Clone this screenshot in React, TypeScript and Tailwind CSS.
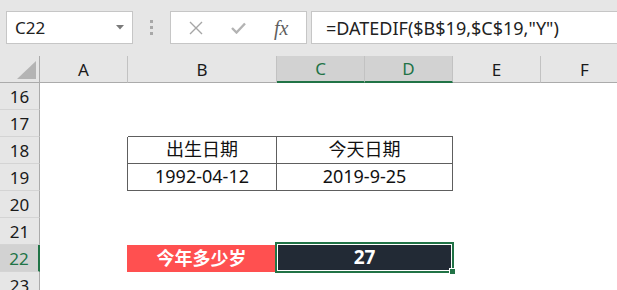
import React from "react";

const font = { fontFamily: '"Noto Sans", "Noto Sans CJK SC", sans-serif' };

type Col = { key: string; w: string };
const cols: Col[] = [
  { key: "A", w: "w-[88px]" },
  { key: "B", w: "w-[149px]" },
  { key: "C", w: "w-[88px]" },
  { key: "D", w: "w-[88px]" },
  { key: "E", w: "w-[88px]" },
  { key: "F", w: "w-[88px]" },
];

function RowHeader({ n, active }: { n: number; active?: boolean }) {
  return (
    <div
      className={
        "w-[40px] h-[27px] shrink-0 flex items-center justify-center text-[17px] leading-none border-b border-[#d4d4d4] " +
        (active
          ? "bg-[#d2d2d2] text-[#217346] border-r-2 border-r-[#217346]"
          : "bg-[#e6e6e6] text-[#1a1a1a] border-r border-r-[#ababab]")
      }
    >
      {n}
    </div>
  );
}

function Toolbar() {
  return (
    <div className="h-[56px] bg-[#e6e6e6] flex items-start pt-[11px]">
      <div className="ml-[6px] w-[127px] h-[33px] bg-white border border-[#c6c6c6] flex items-center pl-[8px] pr-[8px]">
        <span className="text-[17px] text-[#222] leading-none flex-1">C22</span>
        <svg width="8" height="5" viewBox="0 0 8 5">
          <polygon points="0,0 8,0 4,4.5" fill="#7a7a7a" />
        </svg>
      </div>
      <div className="w-[37px] h-[33px] flex flex-col items-center justify-center gap-[3px]">
        <div className="w-[3px] h-[3px] bg-[#a8a8a8]" />
        <div className="w-[3px] h-[3px] bg-[#a8a8a8]" />
        <div className="w-[3px] h-[3px] bg-[#a8a8a8]" />
      </div>
      <div className="w-[137px] h-[33px] bg-white border border-[#c6c6c6] flex items-center">
        <div className="w-[50px] flex justify-center pl-[1px]">
          <svg width="14" height="14" viewBox="0 0 14 14">
            <path d="M1 1 L13 13 M13 1 L1 13" stroke="#a6a6a6" strokeWidth="1.4" fill="none" />
          </svg>
        </div>
        <div className="w-[36px] flex justify-center">
          <svg width="15" height="12" viewBox="0 0 15 12">
            <path d="M1 6 L5.5 10.5 L14 1.5" stroke="#b3b3b3" strokeWidth="2.4" fill="none" />
          </svg>
        </div>
        <div className="w-[50px] flex justify-center">
          <span
            className="italic text-[20px] leading-none text-[#5f5f5f]"
            style={{ fontFamily: '"Liberation Serif", serif' }}
          >
            fx
          </span>
        </div>
      </div>
      <div className="ml-[4px] flex-1 h-[33px] bg-white border-y border-l border-[#c6c6c6] flex items-center pl-[14px]">
        <span className="text-[18px] leading-none text-[#222] whitespace-nowrap">=DATEDIF($B$19,$C$19,"Y")</span>
      </div>
    </div>
  );
}

function HeaderRow() {
  return (
    <div className="flex h-[27px]">
      <div className="w-[40px] shrink-0 bg-[#e6e6e6] border-r border-b border-[#ababab] relative overflow-hidden">
        <svg className="absolute right-[3px] bottom-[3px]" width="19" height="18" viewBox="0 0 19 18">
          <polygon points="19,0 19,18 0,18" fill="#b4b4b4" />
        </svg>
      </div>
      {cols.map((c) => {
        const sel = c.key === "C" || c.key === "D";
        return (
          <div
            key={c.key}
            className={
              c.w +
              " shrink-0 flex items-center justify-center text-[17px] leading-none border-r border-r-[#c2c2c2] " +
              (sel
                ? "bg-[#d2d2d2] text-[#217346] border-b-2 border-b-[#217346]"
                : "bg-[#e6e6e6] text-[#1a1a1a] border-b border-b-[#ababab]")
            }
          >
            {c.key}
          </div>
        );
      })}
    </div>
  );
}

function EmptyRow({ n }: { n: number }) {
  return (
    <div className="flex h-[27px]">
      <RowHeader n={n} />
      <div className="flex-1 bg-white" />
    </div>
  );
}

export default function App() {
  const line = "border-[#5e5e5e]";
  return (
    <div className="w-[617px] h-[290px] overflow-hidden bg-white relative" style={font}>
      <Toolbar />
      <HeaderRow />
      <EmptyRow n={16} />
      {/* row 17: carries table top border */}
      <div className="flex h-[27px]">
        <RowHeader n={17} />
        <div className="w-[88px] shrink-0" />
        <div className={"w-[149px] shrink-0 border-b " + line} />
        <div className={"w-[176px] shrink-0 border-b " + line} />
      </div>
      {/* row 18 */}
      <div className="flex h-[27px]">
        <RowHeader n={18} />
        <div className={"w-[88px] shrink-0 border-r " + line} />
        <div className={"w-[149px] shrink-0 border-r border-b flex items-center justify-center pb-[2px] text-[18px] leading-none text-[#111] " + line}>
          出生日期
        </div>
        <div className={"w-[176px] shrink-0 border-r border-b flex items-center justify-center pb-[2px] text-[18px] leading-none text-[#111] " + line}>
          今天日期
        </div>
      </div>
      {/* row 19 */}
      <div className="flex h-[27px]">
        <RowHeader n={19} />
        <div className={"w-[88px] shrink-0 border-r " + line} />
        <div className={"w-[149px] shrink-0 border-r border-b flex items-center justify-center pb-[2px] text-[18px] leading-none text-[#111] " + line}>
          1992-04-12
        </div>
        <div className={"w-[176px] shrink-0 border-r border-b flex items-center justify-center pb-[2px] text-[18px] leading-none text-[#111] " + line}>
          2019-9-25
        </div>
      </div>
      <EmptyRow n={20} />
      <EmptyRow n={21} />
      {/* row 22 */}
      <div className="flex h-[27px]">
        <RowHeader n={22} active />
        <div className="w-[87px] shrink-0" />
        <div className="w-[149px] shrink-0 bg-[#ff5050] flex items-center justify-center text-[18px] font-bold leading-none text-white pb-[1px]">
          今年多少岁
        </div>
        <div className="w-[177px] shrink-0 bg-[#222a35] flex items-center justify-center text-[19px] font-bold leading-none text-white pb-[2px]">
          27
        </div>
      </div>
      <EmptyRow n={23} />
      {/* selection overlay */}
      <div className="absolute left-[275px] top-[242px] w-[179px] h-[31px] border-2 border-[#217346] pointer-events-none">
        <div className="w-full h-full border border-white" />
      </div>
      <div className="absolute left-[449px] top-[268px] w-[7px] h-[7px] bg-[#217346] border border-white" />
    </div>
  );
}
